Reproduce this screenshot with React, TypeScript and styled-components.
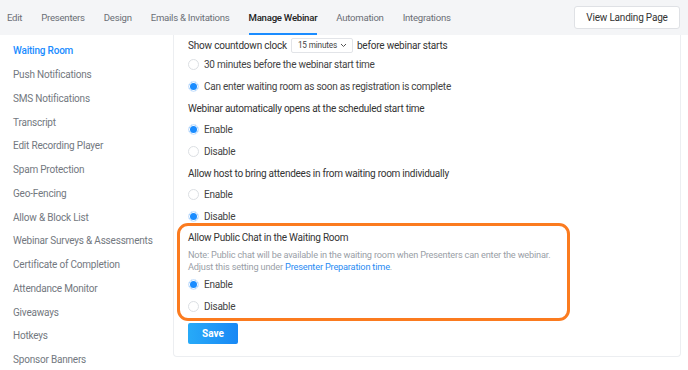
import styled, { createGlobalStyle } from "styled-components";

const GlobalStyle = createGlobalStyle`
  body {
    margin: 0;
    background: #fff;
    font-family: Roboto, "Liberation Sans", sans-serif;
    color: #333;
  }
`;

const tabs = [
  "Edit",
  "Presenters",
  "Design",
  "Emails & Invitations",
  "Manage Webinar",
  "Automation",
  "Integrations",
];

const menu = [
  "Waiting Room",
  "Push Notifications",
  "SMS Notifications",
  "Transcript",
  "Edit Recording Player",
  "Spam Protection",
  "Geo-Fencing",
  "Allow & Block List",
  "Webinar Surveys & Assessments",
  "Certificate of Completion",
  "Attendance Monitor",
  "Giveaways",
  "Hotkeys",
  "Sponsor Banners",
];

const Option = ({ label, checked }: { label: string; checked?: boolean }) => (
  <OptionRow>
    <Radio checked={!!checked} />
    <span>{label}</span>
  </OptionRow>
);

const App = () => {
  return (
    <Page>
      <GlobalStyle />
      <TopBar>
        <Tabs>
          {tabs.map((t) => (
            <Tab key={t} active={t === "Manage Webinar"}>
              {t}
            </Tab>
          ))}
        </Tabs>
        <LandingButton>View Landing Page</LandingButton>
      </TopBar>
      <Body>
        <Sidebar>
          {menu.map((m, i) => (
            <MenuItem key={m} active={i === 0}>
              {m}
            </MenuItem>
          ))}
        </Sidebar>
        <Panel>
          <CountdownRow>
            Show countdown clock
            <Select>
              15 minutes
              <svg width="7" height="5" viewBox="0 0 7 5">
                <path d="M1 1l2.5 2.5L6 1" fill="none" stroke="#555" strokeWidth="1" />
              </svg>
            </Select>
            before webinar starts
          </CountdownRow>
          <Option label="30 minutes before the webinar start time" />
          <Option label="Can enter waiting room as soon as registration is complete" checked />
          <Question>Webinar automatically opens at the scheduled start time</Question>
          <Option label="Enable" checked />
          <Option label="Disable" />
          <Question>Allow host to bring attendees in from waiting room individually</Question>
          <Option label="Enable" />
          <Option label="Disable" checked />
          <Highlight>
            <BoxTitle>Allow Public Chat in the Waiting Room</BoxTitle>
            <Note>
              Note: Public chat will be available in the waiting room when Presenters can enter the webinar.
              <br />
              Adjust this setting under <NoteLink>Presenter Preparation time</NoteLink>.
            </Note>
            <Option label="Enable" checked />
            <Option label="Disable" />
          </Highlight>
          <SaveButton>Save</SaveButton>
        </Panel>
      </Body>
    </Page>
  );
};

const Page = styled.div`
  width: 688px;
  height: 370px;
  overflow: hidden;
`;

const TopBar = styled.div`
  height: 35px;
  background: #f4f5f7;
  display: flex;
  align-items: center;
  justify-content: space-between;
  padding: 0 8px 0 7px;
`;

const Tabs = styled.div`
  display: flex;
  gap: 19px;
  height: 100%;
`;

const Tab = styled.div<{ active: boolean }>`
  height: 100%;
  box-sizing: border-box;
  display: flex;
  align-items: center;
  padding-top: 1px;
  font-size: 9.6px;
  letter-spacing: -0.25px;
  white-space: nowrap;
  font-weight: ${({ active }) => (active ? 500 : 400)};
  color: ${({ active }) => (active ? "#222" : "#6b6f76")};
  border-bottom: 2px solid ${({ active }) => (active ? "#1a8cff" : "transparent")};
`;

const LandingButton = styled.div`
  width: 106px;
  height: 23px;
  box-sizing: border-box;
  background: #fff;
  border: 1px solid #dfe1e5;
  border-radius: 3px;
  display: flex;
  align-items: center;
  justify-content: center;
  font-size: 10px;
  letter-spacing: -0.2px;
  color: #333;
`;

const Body = styled.div`
  display: flex;
`;

const Sidebar = styled.div`
  width: 173px;
  padding: 4px 0 0 13px;
  box-sizing: border-box;
  display: flex;
  flex-direction: column;
`;

const MenuItem = styled.div<{ active: boolean }>`
  height: 23.75px;
  display: flex;
  align-items: center;
  font-size: 10px;
  letter-spacing: -0.2px;
  white-space: nowrap;
  font-weight: ${({ active }) => (active ? 500 : 400)};
  color: ${({ active }) => (active ? "#1a8cff" : "#737880")};
`;

const Panel = styled.div`
  width: 508px;
  height: 322px;
  box-sizing: border-box;
  border: 1px solid #eceef1;
  border-top: none;
  border-radius: 0 0 4px 4px;
  padding: 1px 0 0 14px;
  display: flex;
  flex-direction: column;
  align-items: flex-start;
`;

const CountdownRow = styled.div`
  height: 18px;
  display: flex;
  align-items: center;
  gap: 4px;
  font-size: 10px;
  letter-spacing: -0.2px;
  white-space: nowrap;
  color: #333;
`;

const Select = styled.div`
  width: 62px;
  height: 15px;
  box-sizing: border-box;
  border: 1px solid #e2e4e8;
  border-radius: 2px;
  display: flex;
  align-items: center;
  justify-content: space-between;
  padding: 0 5px 0 6px;
  font-size: 8.2px;
  letter-spacing: -0.15px;
  white-space: nowrap;
  color: #444;
`;

const OptionRow = styled.div`
  height: 21.7px;
  display: flex;
  align-items: center;
  gap: 5px;
  font-size: 10px;
  letter-spacing: -0.25px;
  white-space: nowrap;
  color: #444;
`;

const Radio = styled.span<{ checked: boolean }>`
  width: 11px;
  height: 11px;
  box-sizing: border-box;
  border-radius: 50%;
  border: 1px solid ${({ checked }) => (checked ? "#e4effd" : "#dcdfe3")};
  background: ${({ checked }) => (checked ? "#1a8cff" : "#fff")};
  box-shadow: ${({ checked }) => (checked ? "inset 0 0 0 1px #fff" : "none")};
`;

const Question = styled.div`
  height: 21.7px;
  display: flex;
  align-items: center;
  font-size: 10px;
  letter-spacing: -0.25px;
  white-space: nowrap;
  color: #333;
`;

const Highlight = styled.div`
  width: 393px;
  box-sizing: border-box;
  margin: -5px 0 0 -11px;
  padding: 4px 8px 1px 8px;
  border: 3px solid #fb7b1f;
  border-radius: 11px;
`;

const BoxTitle = styled.div`
  height: 16px;
  display: flex;
  align-items: center;
  font-size: 10px;
  letter-spacing: -0.25px;
  color: #333;
`;

const Note = styled.div`
  margin: 3px 0 1px;
  font-size: 9.2px;
  line-height: 12px;
  letter-spacing: -0.18px;
  white-space: nowrap;
  color: #9aa0a7;
`;

const NoteLink = styled.span`
  color: #2b8cf3;
`;

const SaveButton = styled.div`
  width: 50px;
  height: 21px;
  margin-top: 2px;
  border-radius: 2px;
  background: linear-gradient(90deg, #27aaf8, #1888f5);
  color: #fff;
  font-size: 10px;
  font-weight: 700;
  display: flex;
  align-items: center;
  justify-content: center;
`;

export default App;
